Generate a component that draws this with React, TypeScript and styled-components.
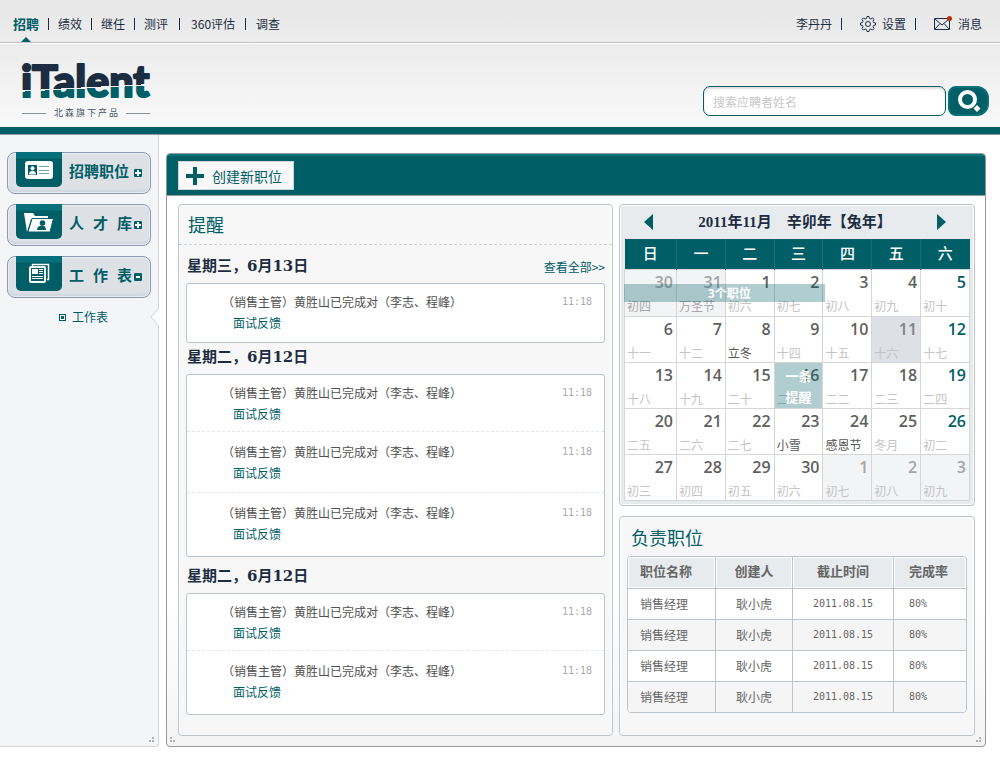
import React from "react";
import styled, { createGlobalStyle } from "styled-components";

const TEAL = "#005e66";
const NAVY = "#1c2d42";
const LINE = "#bcc4cc";
const SANS = '"Noto Sans CJK SC", "Liberation Sans", sans-serif';
const MONO = '"DejaVu Sans Mono", monospace';

const GlobalStyle = createGlobalStyle`
  * { box-sizing: border-box; }
  body {
    margin: 0;
    background: #fff;
    color: ${NAVY};
    font: 12px/16px ${SANS};
  }
  a { color: inherit; text-decoration: none; }
  button { font-family: inherit; cursor: pointer; }
  h1, h2, h3, ul { margin: 0; padding: 0; }
  ul { list-style: none; }
`;

const Page = styled.div`
  min-height: 100vh;
`;

/* ---------- top bar ---------- */

const TopBar = styled.div`
  display: flex;
  align-items: center;
  justify-content: space-between;
  height: 43px;
  padding: 5px 18px 0 13px;
  background: linear-gradient(#e7e7e7, #ececec);
  border-bottom: 1px solid #c3c3c3;
`;

const NavList = styled.ul`
  display: flex;
  align-items: center;
`;

const NavItem = styled.li<{ $gap?: number }>`
  position: relative;
  display: flex;
  align-items: center;

  &:not(:first-child)::before {
    content: "";
    width: 1px;
    height: 12px;
    margin: 0 ${(p) => p.$gap ?? 9}px;
    background: ${NAVY};
  }
`;

const NavLink = styled.a<{ $active?: boolean; $icon?: boolean }>`
  display: flex;
  align-items: center;
  gap: 6px;
  padding-left: ${(p) => (p.$icon ? 9 : 0)}px;
  font-size: ${(p) => (p.$active ? 13 : 12)}px;
  font-weight: ${(p) => (p.$active ? 700 : 400)};
  color: ${(p) => (p.$active ? TEAL : NAVY)};
`;

const ActiveMark = styled.span`
  position: absolute;
  left: 50%;
  top: 21px;
  margin-left: -5px;
  border: 5px solid transparent;
  border-top: 0;
  border-bottom-color: ${TEAL};
`;

/* ---------- header ---------- */

const Header = styled.header`
  display: flex;
  justify-content: space-between;
  align-items: flex-start;
  height: 92px;
  padding: 18px 11px 0 20px;
  border-top: 1px solid #fff;
  border-bottom: 1px solid #8f9b9c;
  background:
    linear-gradient(${TEAL}, ${TEAL}) bottom / 100% 7px no-repeat,
    linear-gradient(#ececec, #fafafa);
`;

const Brand = styled.div`
  display: flex;
  flex-direction: column;
  width: 132px;
`;

const LogoMark = styled.svg`
  overflow: visible;
`;

const Tagline = styled.div`
  display: flex;
  align-items: center;
  justify-content: space-between;
  padding: 0 2px;
  color: #4a5768;
  font-size: 9px;
  line-height: 12px;
  white-space: nowrap;

  &::before,
  &::after {
    content: "";
    width: 24px;
    height: 1px;
    background: #8a93a0;
  }
`;

const SearchForm = styled.form`
  display: flex;
  gap: 2px;
  margin-top: 24px;
`;

const SearchInput = styled.input`
  width: 243px;
  height: 30px;
  padding: 0 9px;
  border: 1px solid ${TEAL};
  border-radius: 7px;
  background: #fff;
  box-shadow: inset 0 2px 2px #ddd;
  font: 12px/16px ${SANS};
  color: ${NAVY};

  &::placeholder { color: #c8c8c8; opacity: 1; }
`;

const SearchButton = styled.button`
  width: 41px;
  height: 30px;
  padding: 0;
  border: 2px solid #077078;
  border-radius: 8px 12px 12px 8px;
  background: ${TEAL};
  display: flex;
  align-items: center;
  justify-content: center;
`;

/* ---------- body ---------- */

const Body = styled.div`
  display: flex;
  align-items: stretch;
`;

const Sidebar = styled.aside`
  position: relative;
  flex: none;
  width: 159px;
  padding: 17px 7px 0;
  background: #f3f5f7;
  border: solid #d4d6d8;
  border-width: 0 1px 1px 0;
  border-radius: 0 0 4px 0;
`;

const MenuButton = styled.button`
  display: flex;
  align-items: flex-start;
  width: 144px;
  height: 42px;
  margin-bottom: 10px;
  padding: 0 8px;
  border: 1px solid #8e9caf;
  border-radius: 8px;
  background: #dde1e6;
  box-shadow: inset 0 0 0 1px #e9ecef, inset 0 -3px 2px #cfd6de;
  color: ${TEAL};
`;

const MenuIcon = styled.span`
  flex: none;
  display: flex;
  align-items: center;
  justify-content: center;
  width: 46px;
  height: 35px;
  margin-top: -1px;
  border-radius: 0 0 5px 5px;
  background: linear-gradient(#07707a 6px, ${TEAL} 7px);
`;

const MenuLabel = styled.span`
  flex: 1;
  padding-left: 7px;
  text-align: left;
  font: 700 15px/42px "Liberation Mono", "Noto Sans CJK SC", monospace;
  white-space: nowrap;
`;

const Toggle = styled.svg`
  flex: none;
  margin-top: 16px;
`;

const SubItem = styled.a`
  display: flex;
  align-items: center;
  gap: 6px;
  padding: 1px 0 0 52px;
  color: ${TEAL};
`;

const Bullet = styled.span`
  width: 7px;
  height: 7px;
  border: 1px solid ${TEAL};
  background: ${TEAL};
  box-shadow: inset 0 0 0 1px #fff;
`;

const Notch = styled.svg`
  position: absolute;
  right: -1px;
  top: 173px;
`;

const Grip = styled.svg<{ $side: "left" | "right" }>`
  position: absolute;
  bottom: 3px;
  ${(p) => p.$side}: 3px;
`;

const Main = styled.main`
  position: relative;
  flex: 1;
  min-width: 0;
  margin: 18px 14px 0 7px;
  border: 1px solid #979797;
  border-radius: 4px;
  background: linear-gradient(#fff 75%, #f4f4f4);
`;

const Toolbar = styled.div`
  height: 42px;
  padding: 5px 11px;
  background: ${TEAL};
  border-top: 2px solid #0b747b;
  border-bottom: 1px solid #9a9a9a;
  border-radius: 3px 3px 0 0;
`;

const CreateButton = styled.button`
  display: flex;
  align-items: center;
  gap: 7px;
  height: 29px;
  padding: 0 11px 0 6px;
  border: 1px solid #cfd5d9;
  background: #f8f8f8;
  color: ${TEAL};
  font-size: 14px;
  line-height: 20px;
`;

const Columns = styled.div`
  display: flex;
  gap: 6px;
  padding: 8px 10px 10px 11px;
`;

const Panel = styled.section<{ $tint?: boolean }>`
  border: 1px solid ${LINE};
  border-radius: 4px;
  background: ${(p) => (p.$tint ? "#e7ebee" : "#f7f7f7")};
  box-shadow: inset 0 0 0 1px #fff;
`;

const Reminders = styled(Panel)`
  flex: 1;
  min-width: 0;
  padding-bottom: 20px;
`;

const PanelTitle = styled.h2<{ $ruled?: boolean }>`
  padding: ${(p) => (p.$ruled ? "0 9px" : "0 11px")};
  height: ${(p) => (p.$ruled ? 40 : 39)}px;
  font-size: 18px;
  font-weight: 400;
  line-height: ${(p) => (p.$ruled ? 38 : 40)}px;
  color: ${TEAL};
  border-bottom: ${(p) => (p.$ruled ? "1px dashed #cdd2d7" : "0")};
`;

const DayGroup = styled.div<{ $gap: number }>`
  padding: ${(p) => p.$gap}px 7px 0;
`;

const DayHead = styled.div`
  display: flex;
  align-items: center;
  justify-content: space-between;
  padding: 0 0 5px 1px;
`;

const DayTitle = styled.h3`
  font: 700 15px/23px "DejaVu Serif", "Noto Sans CJK SC", serif;
`;

const MoreLink = styled.a`
  color: ${TEAL};
`;

const Card = styled.ul`
  border: 1px solid ${LINE};
  border-radius: 3px;
  background: #fff;
`;

const Entry = styled.li`
  display: flex;
  justify-content: space-between;
  padding: 7px 12px 7px 35px;
  line-height: 21px;
  color: #4f4f4f;

  & + & {
    padding-top: 9px;
    padding-bottom: 9px;
    border-top: 1px dashed #e4e6e8;
  }
  &:last-child { padding-bottom: 12px; }
  &:only-child { padding-bottom: 9px; }
`;

const EntryLink = styled.a`
  display: block;
  padding-left: 11px;
  color: ${TEAL};
`;

const Time = styled.time`
  font-family: ${MONO};
  font-size: 10px;
  color: #a9a9a9;
`;

const SideColumn = styled.div`
  flex: none;
  width: 356px;
  display: flex;
  flex-direction: column;
  gap: 10px;
`;

/* ---------- calendar ---------- */

const Calendar = styled(Panel)`
  padding: 0 4px 4px;
`;

const CalendarHead = styled.div`
  display: flex;
  align-items: center;
  justify-content: space-between;
  height: 34px;
  padding: 0 24px 0 20px;
`;

const MonthTitle = styled.h2`
  font: 700 15px/20px "Liberation Serif", "Noto Sans CJK SC", serif;
`;

const Arrow = styled.button<{ $dir: "left" | "right" }>`
  width: 9px;
  height: 16px;
  padding: 0;
  border: 0;
  background: ${TEAL};
  clip-path: ${(p) =>
    p.$dir === "left" ? "polygon(100% 0, 100% 100%, 0 50%)" : "polygon(0 0, 100% 50%, 0 100%)"};
`;

const MonthWrap = styled.div`
  position: relative;
`;

const Month = styled.table`
  width: 100%;
  table-layout: fixed;
  border-collapse: collapse;
`;

const Weekday = styled.th`
  height: 30px;
  padding: 0 0 1px;
  background: ${TEAL};
  color: #fff;
  font-size: 15px;
  font-weight: 500;

  &:first-child { width: 52px; }
  & + & { border-left: 1px solid #0d747b; }
`;

type DayTone = "normal" | "outside" | "today";

const DayCell = styled.td<{ $tone: DayTone }>`
  position: relative;
  height: 46px;
  padding: 0;
  border: 1px solid #d6d6d6;
  vertical-align: top;
  background: ${(p) => ({ normal: "#fff", outside: "#f3f4f6", today: "#dde1e6" })[p.$tone]};

  tr:first-child > & { height: 47px; }
`;

const DayNumber = styled.div<{ $color: string }>`
  padding-right: 3px;
  text-align: right;
  font: 600 16px/24px "Open Sans", "Noto Sans", sans-serif;
  color: ${(p) => p.$color};
`;

const Lunar = styled.div<{ $color: string }>`
  padding: 3px 0 0 2px;
  line-height: 18px;
  white-space: nowrap;
  color: ${(p) => p.$color};
`;

const SpanEvent = styled.div`
  position: absolute;
  left: 0;
  top: 45px;
  width: 58%;
  padding-left: 10px;
  background: rgba(0, 94, 102, 0.31);
  color: #fff;
  font-weight: 700;
  line-height: 18px;
  text-align: center;
`;

const DayEvent = styled.div`
  position: absolute;
  inset: 0;
  padding-top: 2px;
  background: rgba(0, 94, 102, 0.31);
  color: #fff;
  font-size: 13px;
  font-weight: 700;
  line-height: 21px;
  text-align: center;
`;

/* ---------- positions table ---------- */

const Positions = styled(Panel)`
  flex: 1;
`;

const TableFrame = styled.div`
  margin: 0 7px;
  border: 1px solid ${LINE};
  border-radius: 4px;
  overflow: hidden;
`;

const DataTable = styled.table`
  width: 100%;
  table-layout: fixed;
  border-collapse: separate;
  border-spacing: 0;
  color: #666;

  th, td { text-align: center; border-left: 1px solid ${LINE}; }
  th:first-child, td:first-child { width: 87px; padding-left: 12px; text-align: left; border-left: 0; }
  th:nth-child(2) { width: 77px; }
  th:nth-child(3) { width: 101px; }
  th:last-child, td:last-child { padding-left: 15px; text-align: left; }
`;

const HeadCell = styled.th`
  height: 31px;
  padding: 0 0 2px;
  background: #e7ebee;
  box-shadow: inset 0 0 0 1px #fff;
  font-size: 13px;
  font-weight: 700;
`;

const DataRow = styled.tr`
  background: #fff;
  &:nth-child(even) { background: #f5f5f5; }
`;

const Cell = styled.td<{ $mono?: boolean }>`
  height: 31px;
  padding: 0;
  border-top: 1px solid ${LINE};
  font-family: ${(p) => (p.$mono ? MONO : "inherit")};
  font-size: ${(p) => (p.$mono ? 10 : 12)}px;
`;

/* ---------- drawings ---------- */

const Logo = () => (
  <LogoMark width="132" height="45" viewBox="0 0 132 45" role="img" aria-label="iTalent">
    <defs>
      <linearGradient id="logoFill" gradientUnits="userSpaceOnUse" x1="66" y1="0" x2="68" y2="40">
        <stop offset="0.63" stopColor={NAVY} />
        <stop offset="0.63" stopColor="#f2f2f2" />
        <stop offset="0.66" stopColor="#f2f2f2" />
        <stop offset="0.66" stopColor={TEAL} />
      </linearGradient>
    </defs>
    <text
      x="1"
      y="35"
      fontFamily="Lato"
      fontSize="43"
      fontWeight="900"
      fill="url(#logoFill)"
      stroke="url(#logoFill)"
      strokeWidth="2"
      strokeLinejoin="round"
    >
      iTalent
    </text>
  </LogoMark>
);

const GearIcon = () => (
  <svg width="16" height="16" viewBox="0 0 16 16" fill="none" stroke={NAVY} strokeLinejoin="round">
    <path d="M6.5 2.5 7 .5h2l.5 2 1.3.5 1.8-1 1.4 1.4-1 1.8.5 1.3 2 .5v2l-2 .5-.5 1.3 1 1.8-1.4 1.4-1.8-1-1.3.5-.5 2H7l-.5-2-1.3-.5-1.8 1L2 12.600l1-1.800-.5-1.300-2-.5V7l2-.5L3 5.200 2 3.400 3.400 2l1.800 1z" />
    <circle cx="8" cy="8" r="2.500" />
  </svg>
);

const MailIcon = () => (
  <svg width="18" height="16" viewBox="0 0 18 16" fill="none" stroke={NAVY}>
    <path d="M.5 2.500h15v11H.5zM1 3l7 6 7-6M1 13l5-5.500M15 13l-5-5.500" />
    <circle cx="15.500" cy="2.500" r="2.500" fill="#b8310c" stroke="none" />
  </svg>
);

const SearchIcon = () => (
  <svg width="24" height="24" viewBox="0 0 24 24" fill="none" stroke="#fff">
    <circle cx="10.500" cy="10.500" r="7.500" strokeWidth="4" />
    <path d="M16.500 19.500l3.500-3.500 3.500 3.500-3.500 3.500z" fill="#fff" stroke="none" />
  </svg>
);

const PlusIcon = () => (
  <svg width="20" height="20" viewBox="0 0 20 20" fill="none" stroke={TEAL} strokeWidth="4">
    <path d="M1 10h18M10 1v18" />
  </svg>
);

const CardIcon = () => (
  <svg width="28" height="20" viewBox="0 0 28 20">
    <rect y="1" width="28" height="18" rx="3" fill="#fff" />
    <rect x="3" y="5" width="9" height="10" fill={TEAL} />
    <circle cx="7.500" cy="8.300" r="2" fill="#fff" />
    <path d="M4 14.500c0-5 7-5 7 0z" fill="#fff" />
    <path d="M14 6.500h10M14 10.500h10M14 13.500h10" stroke="#6fa3a8" />
  </svg>
);

const FolderIcon = () => (
  <svg width="30" height="22" viewBox="0 0 30 22">
    <path d="M0 2h9l2 3h13v3H7L3 21z" fill="#fff" />
    <path d="M8 7.500h21.500L26 21H4z" fill="#fff" stroke={TEAL} />
    <circle cx="18.500" cy="12" r="2.800" fill={TEAL} />
    <path d="M13 19c0-4 4-4.500 5-4.500s4 .5 4 4.500z" fill={TEAL} />
  </svg>
);

const PaperIcon = () => (
  <svg width="22" height="22" viewBox="0 0 22 22" fill="none">
    <path d="M4.500 3V1.500h16v15H19" stroke="#fff" strokeWidth="1.500" />
    <rect x="2" y="4" width="15" height="15" rx="1" stroke="#fff" strokeWidth="2" />
    <rect x="4" y="6" width="6" height="5" fill="#fff" />
    <path d="M11 6.500h4M11 8.500h4M11 10.500h4M4 13.500h11M4 15.500h11" stroke="#fff" />
  </svg>
);

const ToggleIcon = ({ open }: { open: boolean }) => (
  <Toggle width="8" height="8" viewBox="0 0 8 8">
    <rect width="8" height="8" rx="1" fill={TEAL} />
    {open ? (
      <path d="M2 3h4v2H2z" fill="#fff" />
    ) : (
      <path d="M3 1h2v2h2v2H5v2H3V5H1V3h2z" fill="#fff" />
    )}
  </Toggle>
);

const GripDots = ({ side }: { side: "left" | "right" }) => (
  <Grip $side={side} width="6" height="6" viewBox="0 0 6 6" fill="#b0b0b0">
    <path d={side === "right" ? "M3 0h2v2H3zM0 3h2v2H0zM3 3h2v2H3z" : "M0 0h2v2H0zM0 3h2v2H0zM3 3h2v2H3z"} />
  </Grip>
);

/* ---------- data ---------- */

const groups = [
  { title: "星期三，6月13日", gap: 10, count: 1, more: true },
  { title: "星期二，6月12日", gap: 3, count: 3, more: false },
  { title: "星期二，6月12日", gap: 8, count: 2, more: false },
];

const weekdays = ["日", "一", "二", "三", "四", "五", "六"];

const weeks = [
  ["30 初四", "31 万圣节", "1 初六", "2 初七", "3 初八", "4 初九", "5 初十"],
  ["6 十一", "7 十二", "8 立冬", "9 十四", "10 十五", "11 十六", "12 十七"],
  ["13 十八", "14 十九", "15 二十", "16 二一", "17 二二", "18 二三", "19 二四"],
  ["20 二五", "21 二六", "22 二七", "23 小雪", "24 感恩节", "25 冬月", "26 初二"],
  ["27 初三", "28 初四", "29 初五", "30 初六", "1 初七", "2 初八", "3 初九"],
];

const festivals = ["立冬", "小雪", "感恩节"];

const Day = ({ text, week, col }: { text: string; week: number; col: number }) => {
  const [num, lunar] = text.split(" ");
  const outside = (week === 0 && col < 2) || (week === 4 && col > 3);
  const today = week === 1 && col === 5;
  const numColor = outside ? "#a6a6a6" : today ? "#7f8386" : col === 6 ? TEAL : "#5f5f5f";
  const lunarColor = festivals.includes(lunar) ? "#555" : week === 0 && outside ? "#a8a8a8" : "#c4c4c4";
  return (
    <DayCell $tone={outside ? "outside" : today ? "today" : "normal"}>
      <DayNumber $color={numColor}>{num}</DayNumber>
      <Lunar $color={lunarColor}>{lunar}</Lunar>
      {week === 2 && col === 3 && (
        <DayEvent>
          一条
          <br />
          提醒
        </DayEvent>
      )}
    </DayCell>
  );
};

export default function App() {
  return (
    <Page>
      <GlobalStyle />
      <TopBar>
        <nav>
          <NavList>
            <NavItem>
              <NavLink href="#" $active>招聘</NavLink>
              <ActiveMark />
            </NavItem>
            <NavItem><NavLink href="#">绩效</NavLink></NavItem>
            <NavItem><NavLink href="#">继任</NavLink></NavItem>
            <NavItem><NavLink href="#">测评</NavLink></NavItem>
            <NavItem $gap={11}><NavLink href="#">360评估</NavLink></NavItem>
            <NavItem $gap={10}><NavLink href="#">调查</NavLink></NavItem>
          </NavList>
        </nav>
        <NavList>
          <NavItem><NavLink href="#">李丹丹</NavLink></NavItem>
          <NavItem><NavLink href="#" $icon><GearIcon />设置</NavLink></NavItem>
          <NavItem><NavLink href="#" $icon><MailIcon />消息</NavLink></NavItem>
        </NavList>
      </TopBar>

      <Header>
        <Brand>
          <Logo />
          <Tagline>北 森 旗 下 产 品</Tagline>
        </Brand>
        <SearchForm onSubmit={(e) => e.preventDefault()}>
          <SearchInput type="text" aria-label="搜索应聘者姓名" placeholder="搜索应聘者姓名" />
          <SearchButton type="submit" aria-label="搜索"><SearchIcon /></SearchButton>
        </SearchForm>
      </Header>

      <Body>
        <Sidebar>
          <MenuButton>
            <MenuIcon><CardIcon /></MenuIcon>
            <MenuLabel>招聘职位</MenuLabel>
            <ToggleIcon open={false} />
          </MenuButton>
          <MenuButton>
            <MenuIcon><FolderIcon /></MenuIcon>
            <MenuLabel>人 才 库</MenuLabel>
            <ToggleIcon open={false} />
          </MenuButton>
          <MenuButton>
            <MenuIcon><PaperIcon /></MenuIcon>
            <MenuLabel>工 作 表</MenuLabel>
            <ToggleIcon open />
          </MenuButton>
          <SubItem href="#"><Bullet />工作表</SubItem>
          <Notch width="9" height="18" viewBox="0 0 9 18">
            <path d="M9 0L1 9l8 9z" fill="#fff" />
            <path d="M8.500 .5L1 9l7.500 8.500" fill="none" stroke="#cfd2d5" />
          </Notch>
          <GripDots side="right" />
        </Sidebar>

        <Main>
          <Toolbar>
            <CreateButton><PlusIcon />创建新职位</CreateButton>
          </Toolbar>
          <Columns>
            <Reminders>
              <PanelTitle $ruled>提醒</PanelTitle>
              {groups.map((g, i) => (
                <DayGroup key={i} $gap={g.gap}>
                  <DayHead>
                    <DayTitle>{g.title}</DayTitle>
                    {g.more && <MoreLink href="#">查看全部&gt;&gt;</MoreLink>}
                  </DayHead>
                  <Card>
                    {Array.from({ length: g.count }, (_, n) => (
                      <Entry key={n}>
                        <div>
                          （销售主管）黄胜山已完成对（李志、程峰）
                          <EntryLink href="#">面试反馈</EntryLink>
                        </div>
                        <Time>11:18</Time>
                      </Entry>
                    ))}
                  </Card>
                </DayGroup>
              ))}
            </Reminders>

            <SideColumn>
              <Calendar $tint>
                <CalendarHead>
                  <Arrow $dir="left" aria-label="上个月" />
                  <MonthTitle>2011年11月　辛卯年【兔年】</MonthTitle>
                  <Arrow $dir="right" aria-label="下个月" />
                </CalendarHead>
                <MonthWrap>
                  <Month>
                    <thead>
                      <tr>{weekdays.map((d) => <Weekday key={d}>{d}</Weekday>)}</tr>
                    </thead>
                    <tbody>
                      {weeks.map((days, w) => (
                        <tr key={w}>
                          {days.map((d, c) => <Day key={c} text={d} week={w} col={c} />)}
                        </tr>
                      ))}
                    </tbody>
                  </Month>
                  <SpanEvent>3个职位</SpanEvent>
                </MonthWrap>
              </Calendar>

              <Positions>
                <PanelTitle>负责职位</PanelTitle>
                <TableFrame>
                  <DataTable>
                    <thead>
                      <tr>
                        <HeadCell>职位名称</HeadCell>
                        <HeadCell>创建人</HeadCell>
                        <HeadCell>截止时间</HeadCell>
                        <HeadCell>完成率</HeadCell>
                      </tr>
                    </thead>
                    <tbody>
                      {[0, 1, 2, 3].map((n) => (
                        <DataRow key={n}>
                          <Cell>销售经理</Cell>
                          <Cell>耿小虎</Cell>
                          <Cell $mono>2011.08.15</Cell>
                          <Cell $mono>80%</Cell>
                        </DataRow>
                      ))}
                    </tbody>
                  </DataTable>
                </TableFrame>
              </Positions>
            </SideColumn>
          </Columns>
          <GripDots side="left" />
          <GripDots side="right" />
        </Main>
      </Body>
    </Page>
  );
}
